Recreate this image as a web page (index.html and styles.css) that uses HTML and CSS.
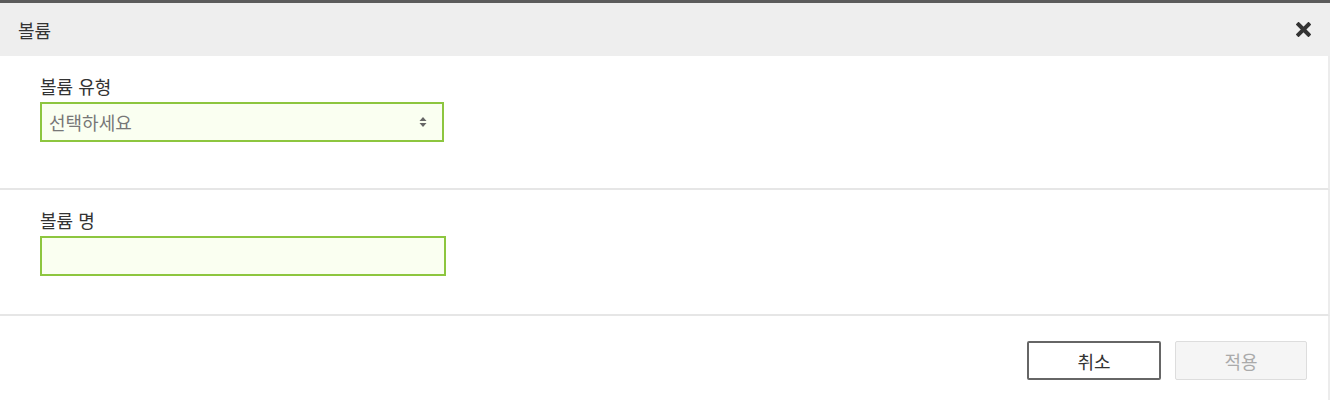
FILE: index.html
```html
<!DOCTYPE html>
<html lang="ko">
<head>
<meta charset="utf-8">
<title>볼륨</title>
<link rel="stylesheet" href="styles.css">
</head>
<body>
<div class="dialog">
  <div class="header">
    <span class="title">볼륨</span>
    <button class="close" type="button" aria-label="닫기">
      <svg width="15" height="15" viewBox="0 0 15 15"><path d="M2.5 2.5 L12.5 12.5 M12.5 2.5 L2.5 12.5" stroke="#333" stroke-width="4" stroke-linecap="square"/></svg>
    </button>
  </div>
  <div class="section first">
    <div class="label">볼륨 유형</div>
    <div class="select">
      <span class="placeholder">선택하세요</span>
      <svg class="arrows" width="8" height="12" viewBox="0 0 8 12"><path d="M4 1 L7.5 5 L0.5 5 Z M4 11 L7.5 7 L0.5 7 Z" fill="#666"/></svg>
    </div>
  </div>
  <div class="section second">
    <div class="label">볼륨 명</div>
    <div class="input"></div>
  </div>
  <div class="footer">
    <button class="btn cancel" type="button">취소</button>
    <button class="btn apply" type="button" disabled>적용</button>
  </div>
</div>
</body>
</html>
```
FILE: styles.css
```css
html, body {
  margin: 0;
  padding: 0;
  background: #fff;
}
body {
  font-family: "Noto Sans CJK KR", "Noto Sans", sans-serif;
  color: #333;
}
.dialog {
  width: 1330px;
  height: 400px;
  box-sizing: border-box;
  border-top: 3px solid #5b5b5b;
  display: flex;
  flex-direction: column;
}
.header {
  height: 53px;
  flex: none;
  background: #eeeeee;
  display: flex;
  align-items: center;
  justify-content: space-between;
  padding: 0 18px;
}
.title {
  font-size: 18px;
  line-height: 24px;
  color: #333;
}
.close {
  border: 0;
  background: none;
  padding: 0;
  margin: 0 1px 0 0;
  width: 15px;
  height: 15px;
  display: flex;
}
.section {
  border-right: 2px solid #ececec;
  border-bottom: 2px solid #e6e6e6;
  padding: 18px 40px 0;
  box-sizing: border-box;
  flex: none;
}
.section.first {
  height: 134px;
}
.section.second {
  height: 126px;
}
.label {
  font-size: 18px;
  line-height: 24px;
  height: 28px;
  color: #333;
}
.select, .input {
  box-sizing: border-box;
  height: 40px;
  border: 2px solid #8dc63f;
  background: #fafff1;
}
.select {
  width: 404px;
  display: flex;
  align-items: center;
  justify-content: space-between;
  padding: 0 15px 0 7px;
}
.placeholder {
  font-size: 18px;
  color: #777;
}
.input {
  width: 406px;
}
.footer {
  flex: 1;
  border-right: 2px solid #ececec;
  display: flex;
  justify-content: flex-end;
  align-items: flex-start;
  gap: 14px;
  padding: 25px 21px 0 0;
}
.btn {
  font-family: "Noto Sans CJK KR", "Noto Sans", sans-serif;
  font-size: 18px;
  height: 39px;
  box-sizing: border-box;
  border-radius: 2px;
  padding: 0;
}
.cancel {
  width: 134px;
  border: 2px solid #666;
  background: #fff;
  color: #333;
}
.apply {
  width: 132px;
  border: 1px solid #dddddd;
  background: #f5f5f5;
  color: #aaa;
}
```
